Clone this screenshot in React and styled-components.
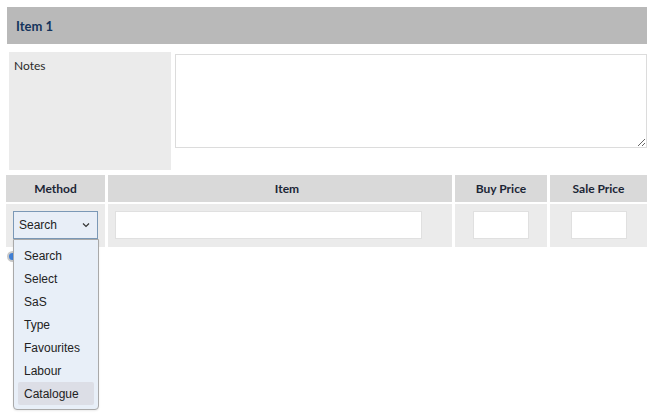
import React from "react";
import styled, { createGlobalStyle } from "styled-components";

const Global = createGlobalStyle`
  html, body { margin: 0; padding: 0; background: #fff; }
  body { font-family: Lato, "Open Sans", sans-serif; }
  * { box-sizing: border-box; }
`;

const Page = styled.div`
  width: 654px;
  height: 413px;
  padding: 7px 7px 0 6px;
  position: relative;
  overflow: hidden;
`;

const TitleBar = styled.div`
  height: 37px;
  margin-left: 1px;
  background: #b9b9b9;
  display: flex;
  align-items: center;
  padding-left: 9px;
  font-family: Lato, sans-serif;
  font-weight: 700;
  font-size: 13px;
  color: #14345c;
`;

const NotesRow = styled.div`
  display: flex;
  margin-top: 8px;
  margin-left: 3px;
  gap: 4px;
  height: 118px;
`;

const NotesLabel = styled.div`
  width: 162px;
  background: #ebebeb;
  padding: 6px 5px;
  font-size: 12px;
  color: #2a2a2a;
`;

const NotesField = styled.textarea`
  flex: 1;
  height: 94px;
  margin-top: 2px;
  border: 1px solid #dcdcdc;
  background: #fff;
  resize: both;
  outline: none;
  font-family: Lato, sans-serif;
`;

const Grid = styled.div`
  display: grid;
  grid-template-columns: 99px 344px 92px 97px;
  column-gap: 3px;
  row-gap: 2px;
  margin-top: 5px;
`;

const HeadCell = styled.div`
  height: 27px;
  background: #d9d9d9;
  display: flex;
  align-items: center;
  justify-content: center;
  padding-left: ${(p) => p.$shift || 0}px;
  font-weight: 700;
  font-size: 12px;
  color: #1c2636;
`;

const BodyCell = styled.div`
  height: 43px;
  background: #ebebeb;
  padding: 7px;
  display: flex;
  justify-content: ${(p) => (p.$center ? "center" : "flex-start")};
  position: relative;
`;

const TextBox = styled.div`
  width: ${(p) => p.$w}px;
  height: 28px;
  background: #fff;
  border: 1px solid #e0e0e0;
`;

const SelectBox = styled.div`
  width: 86px;
  height: 28px;
  background: #e8eef7;
  border: 1px solid #7b98b6;
  display: flex;
  align-items: center;
  justify-content: space-between;
  padding: 0 7px 0 5px;
  font-family: "Liberation Sans", Arial, sans-serif;
  font-size: 12px;
  color: #222;
`;

const Menu = styled.ul`
  position: absolute;
  left: 7px;
  top: 35px;
  width: 86px;
  margin: 0;
  padding: 4px;
  list-style: none;
  background: #e8eff8;
  border: 1px solid #a9a9a9;
  border-radius: 0 0 4px 4px;
  box-shadow: 0 1px 2px rgba(0,0,0,0.08);
  z-index: 2;
`;

const MenuItem = styled.li`
  height: 23px;
  display: flex;
  align-items: center;
  padding-left: 6px;
  border-radius: 2px;
  background: ${(p) => (p.$active ? "#dcdee6" : "transparent")};
  font-family: "Liberation Sans", Arial, sans-serif;
  font-size: 12px;
  color: #222;
`;

const AddDot = styled.span`
  position: absolute;
  left: 1px;
  top: 47px;
  width: 11px;
  height: 11px;
  border-radius: 50%;
  border: 2px solid #c9c9c9;
  background: #3f7fd6;
  z-index: 1;
`;

const options = ["Search", "Select", "SaS", "Type", "Favourites", "Labour", "Catalogue"];

export default function App() {
  return (
    <>
      <Global />
      <Page>
        <TitleBar>Item 1</TitleBar>
        <NotesRow>
          <NotesLabel>Notes</NotesLabel>
          <NotesField />
        </NotesRow>
        <Grid>
          <HeadCell>Method</HeadCell>
          <HeadCell $shift={14}>Item</HeadCell>
          <HeadCell>Buy Price</HeadCell>
          <HeadCell>Sale Price</HeadCell>
          <BodyCell>
            <SelectBox>
              <span>Search</span>
              <svg width="8" height="6" viewBox="0 0 8 6">
                <path d="M1 1.5 L4 4.5 L7 1.5" fill="none" stroke="#333" strokeWidth="1.2" />
              </svg>
            </SelectBox>
            <AddDot />
            <Menu>
              {options.map((o) => (
                <MenuItem key={o} $active={o === "Catalogue"}>{o}</MenuItem>
              ))}
            </Menu>
          </BodyCell>
          <BodyCell>
            <TextBox $w={307} />
          </BodyCell>
          <BodyCell $center>
            <TextBox $w={56} />
          </BodyCell>
          <BodyCell $center>
            <TextBox $w={56} />
          </BodyCell>
        </Grid>
      </Page>
    </>
  );
}
